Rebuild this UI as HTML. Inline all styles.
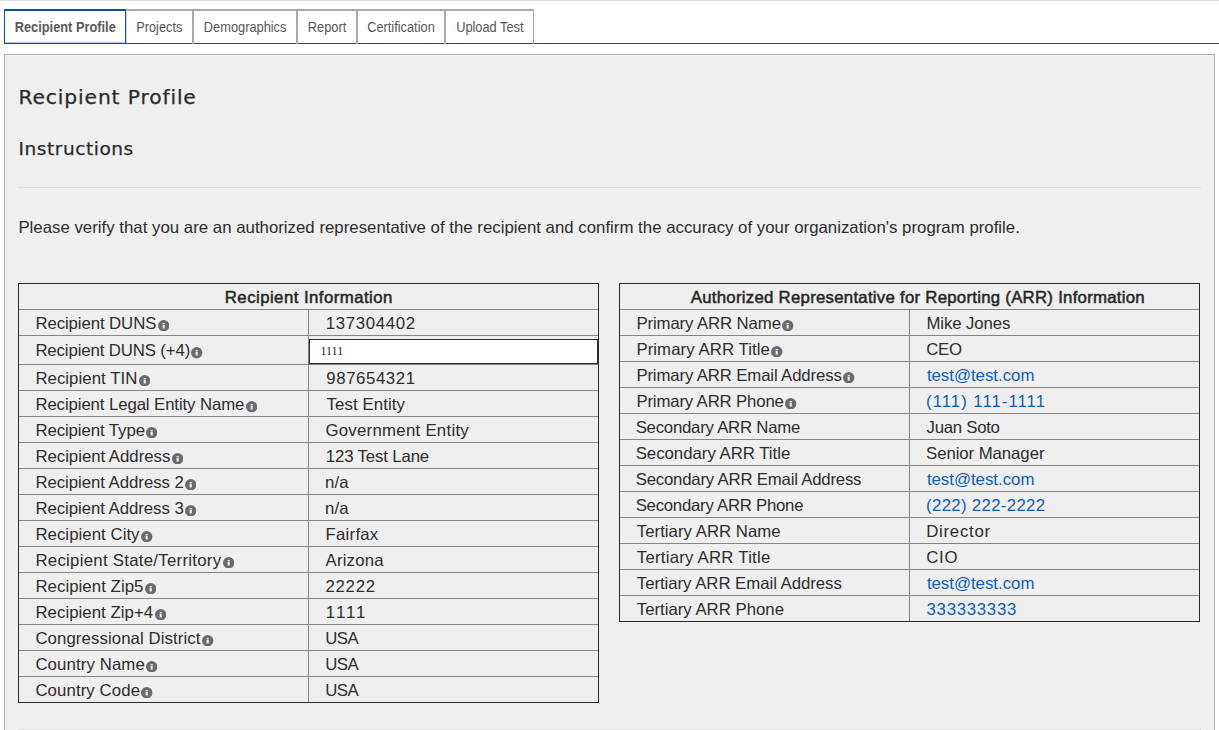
<!DOCTYPE html>
<html lang="en">
<head>
<meta charset="utf-8">
<title>Recipient Profile</title>
<style>
html,body{margin:0;padding:0;background:#fff;}
body{width:1219px;height:730px;overflow:hidden;position:relative;font-family:"Liberation Sans",sans-serif;color:#222;}
.topline{position:absolute;left:0;top:0;width:1219px;height:1px;background:#ddd;}
.tabs{position:absolute;left:4px;top:9px;height:35px;width:1215px;border-bottom:1px solid #0850a3;box-sizing:border-box;}
.tab{position:absolute;top:0;height:34px;box-sizing:border-box;border-top:2px solid #aaa;border-right:2px solid #aaa;font-size:14px;color:#555;line-height:33px;text-align:center;white-space:nowrap;background:#fff;}
.tab span{display:inline-block;transform:scaleX(0.915);transform-origin:50% 50%;}
.tab:not(.active)::after{content:"";position:absolute;right:-2px;bottom:-1px;width:2px;height:1px;background:#aaa;}
.tab.active{border:1px solid #0850a3;border-top-width:2px;border-bottom:1px solid #0850a3;height:35px;font-weight:bold;line-height:33px;color:#595959;box-shadow:inset 0 -1px 0 rgba(8,80,163,0.3);z-index:2;}
.tab.active + .tab{border-left:1px solid #d4d4d4;}
.tab:last-child{border-right-width:1px;}
.tab:last-child::after{right:-1px;width:1px;}
.panel{position:absolute;left:4px;top:54px;width:1211px;height:690px;box-sizing:border-box;border:1px solid #adadad;background:#efefef;box-shadow:inset 0 1px 0 #f6f6f6;}
h1,h2,p{margin:0;padding:0;position:absolute;white-space:nowrap;font-weight:normal;}
h1{left:18.5px;top:85px;font-size:20.3px;letter-spacing:0.85px;font-family:"DejaVu Sans",sans-serif;color:#2a2a2a;-webkit-text-stroke:0.25px #2a2a2a;}
h2{left:18.5px;top:138px;font-size:18.5px;letter-spacing:0.55px;font-family:"DejaVu Sans",sans-serif;color:#2a2a2a;-webkit-text-stroke:0.25px #2a2a2a;}
.hr{position:absolute;left:18px;width:1183px;height:1px;background:#dcdcdc;}
p{left:18.4px;top:217.8px;font-size:16.8px;letter-spacing:0.015px;color:#2c2c2c;transform:scaleY(1.02);transform-origin:0 15px;}
.tbl{position:absolute;box-sizing:border-box;border:1px solid #2b2b2b;}
.row{position:absolute;left:0;width:579px;box-sizing:border-box;border-top:1px solid #858585;height:26px;}
.th{position:absolute;left:0;top:1px;width:579px;height:25px;line-height:25px;text-align:center;font-weight:normal;-webkit-text-stroke:0.5px #262626;color:#262626;font-size:16.8px;white-space:nowrap;transform:scaleY(1.02);transform-origin:0 18.3px;}
.vline{position:absolute;top:25px;width:1px;background:#858585;}
.t{position:absolute;top:0;height:25px;line-height:25px;font-size:16.8px;white-space:nowrap;color:#2c2c2c;transform:scaleY(1.02);transform-origin:0 18.3px;}
a.t{color:#0d5cb6;text-decoration:none;}
.i{position:absolute;width:11.4px;height:11.4px;}
.ibox{position:absolute;box-sizing:border-box;border:1px solid #2b2b2b;background:#fff;}
input{position:absolute;left:0;top:-0.3px;width:287px;height:23px;box-sizing:border-box;border:0;background:transparent;font-family:"Liberation Serif",serif;font-size:12px;line-height:23px;padding:0 0 0 10.5px;margin:0;color:#222;outline:none;border-radius:0;transform:scaleY(1.09);transform-origin:0 50%;}
</style>
</head>
<body>
<div class="topline"></div>
<div class="tabs" role="tablist">
<div class="tab active" role="tab" style="left:0px;width:122px"><span>Recipient Profile</span></div>
<div class="tab" role="tab" style="left:122px;width:68px"><span>Projects</span></div>
<div class="tab" role="tab" style="left:190px;width:104px"><span>Demographics</span></div>
<div class="tab" role="tab" style="left:294px;width:60px"><span>Report</span></div>
<div class="tab" role="tab" style="left:354px;width:88px"><span>Certification</span></div>
<div class="tab" role="tab" style="left:442px;width:88px"><span>Upload Test</span></div>
</div>
<div class="panel"></div>
<h1>Recipient Profile</h1>
<h2>Instructions</h2>
<div class="hr" style="top:187px"></div>
<p>Please verify that you are an authorized representative of the recipient and confirm the accuracy of your organization's program profile.</p>
<div class="tbl" role="table" style="left:18px;top:283px;width:581px;height:420px">
<div class="th" role="columnheader" style="letter-spacing:0.45px;left:0.3px">Recipient Information</div>
<div class="vline" style="left:289px;height:393px"></div>
<div class="row" role="row" style="top:25px;height:26px">
<span class="t" style="left:16.39px;top:1px;letter-spacing:-0.092px">Recipient DUNS</span>
<svg class="i" style="left:138.6px;top:9.9px" viewBox="0 0 11 11"><circle cx="5.5" cy="5.5" r="5.5" fill="#6a6a70"/><rect x="4.45" y="4.7" width="2.1" height="3.5" fill="#ececec"/><rect x="4.45" y="2.9" width="2.1" height="1.3" fill="#e4e4e4"/></svg>
<span class="t" style="left:306.79px;top:1px;letter-spacing:0.653px">137304402</span>
</div>
<div class="row" role="row" style="top:51px;height:29px">
<span class="t" style="left:16.39px;top:1.8px;letter-spacing:-0.125px">Recipient DUNS (+4)</span>
<svg class="i" style="left:172.35px;top:11.4px" viewBox="0 0 11 11"><circle cx="5.5" cy="5.5" r="5.5" fill="#6a6a70"/><rect x="4.45" y="4.7" width="2.1" height="3.5" fill="#ececec"/><rect x="4.45" y="2.9" width="2.1" height="1.3" fill="#e4e4e4"/></svg>
<div class="ibox" style="left:290px;top:3px;width:289px;height:25px"><input type="text" value="1111"></div>
</div>
<div class="row" role="row" style="top:80px;height:26px">
<span class="t" style="left:16.39px;top:1px;letter-spacing:0.044px">Recipient TIN</span>
<svg class="i" style="left:119.6px;top:9.9px" viewBox="0 0 11 11"><circle cx="5.5" cy="5.5" r="5.5" fill="#6a6a70"/><rect x="4.45" y="4.7" width="2.1" height="3.5" fill="#ececec"/><rect x="4.45" y="2.9" width="2.1" height="1.3" fill="#e4e4e4"/></svg>
<span class="t" style="left:307.35px;top:1px;letter-spacing:0.583px">987654321</span>
</div>
<div class="row" role="row" style="top:106px;height:26px">
<span class="t" style="left:16.39px;top:1px;letter-spacing:-0.104px">Recipient Legal Entity Name</span>
<svg class="i" style="left:227.1px;top:9.9px" viewBox="0 0 11 11"><circle cx="5.5" cy="5.5" r="5.5" fill="#6a6a70"/><rect x="4.45" y="4.7" width="2.1" height="3.5" fill="#ececec"/><rect x="4.45" y="2.9" width="2.1" height="1.3" fill="#e4e4e4"/></svg>
<span class="t" style="left:307.59px;top:1px;letter-spacing:0.089px">Test Entity</span>
</div>
<div class="row" role="row" style="top:132px;height:26px">
<span class="t" style="left:16.39px;top:1px;letter-spacing:-0.083px">Recipient Type</span>
<svg class="i" style="left:127.1px;top:9.9px" viewBox="0 0 11 11"><circle cx="5.5" cy="5.5" r="5.5" fill="#6a6a70"/><rect x="4.45" y="4.7" width="2.1" height="3.5" fill="#ececec"/><rect x="4.45" y="2.9" width="2.1" height="1.3" fill="#e4e4e4"/></svg>
<span class="t" style="left:306.39px;top:1px;letter-spacing:0.275px">Government Entity</span>
</div>
<div class="row" role="row" style="top:158px;height:26px">
<span class="t" style="left:16.39px;top:1px;letter-spacing:-0.02px">Recipient Address</span>
<svg class="i" style="left:152.6px;top:9.9px" viewBox="0 0 11 11"><circle cx="5.5" cy="5.5" r="5.5" fill="#6a6a70"/><rect x="4.45" y="4.7" width="2.1" height="3.5" fill="#ececec"/><rect x="4.45" y="2.9" width="2.1" height="1.3" fill="#e4e4e4"/></svg>
<span class="t" style="left:306.79px;top:1px;letter-spacing:-0.145px">123 Test Lane</span>
</div>
<div class="row" role="row" style="top:184px;height:26px">
<span class="t" style="left:16.39px;top:1px;letter-spacing:-0.045px">Recipient Address 2</span>
<svg class="i" style="left:166.1px;top:9.9px" viewBox="0 0 11 11"><circle cx="5.5" cy="5.5" r="5.5" fill="#6a6a70"/><rect x="4.45" y="4.7" width="2.1" height="3.5" fill="#ececec"/><rect x="4.45" y="2.9" width="2.1" height="1.3" fill="#e4e4e4"/></svg>
<span class="t" style="left:306.06px;top:1px;letter-spacing:0.09px">n/a</span>
</div>
<div class="row" role="row" style="top:210px;height:26px">
<span class="t" style="left:16.39px;top:1px;letter-spacing:-0.05px">Recipient Address 3</span>
<svg class="i" style="left:166.1px;top:9.9px" viewBox="0 0 11 11"><circle cx="5.5" cy="5.5" r="5.5" fill="#6a6a70"/><rect x="4.45" y="4.7" width="2.1" height="3.5" fill="#ececec"/><rect x="4.45" y="2.9" width="2.1" height="1.3" fill="#e4e4e4"/></svg>
<span class="t" style="left:306.06px;top:1px;letter-spacing:0.09px">n/a</span>
</div>
<div class="row" role="row" style="top:236px;height:26px">
<span class="t" style="left:16.39px;top:1px;letter-spacing:0.047px">Recipient City</span>
<svg class="i" style="left:122.35px;top:9.9px" viewBox="0 0 11 11"><circle cx="5.5" cy="5.5" r="5.5" fill="#6a6a70"/><rect x="4.45" y="4.7" width="2.1" height="3.5" fill="#ececec"/><rect x="4.45" y="2.9" width="2.1" height="1.3" fill="#e4e4e4"/></svg>
<span class="t" style="left:306.59px;top:1px;letter-spacing:0.23px">Fairfax</span>
</div>
<div class="row" role="row" style="top:262px;height:26px">
<span class="t" style="left:16.39px;top:1px;letter-spacing:0.277px">Recipient State/Territory</span>
<svg class="i" style="left:204.1px;top:9.9px" viewBox="0 0 11 11"><circle cx="5.5" cy="5.5" r="5.5" fill="#6a6a70"/><rect x="4.45" y="4.7" width="2.1" height="3.5" fill="#ececec"/><rect x="4.45" y="2.9" width="2.1" height="1.3" fill="#e4e4e4"/></svg>
<span class="t" style="left:306.51px;top:1px;letter-spacing:0.188px">Arizona</span>
</div>
<div class="row" role="row" style="top:288px;height:26px">
<span class="t" style="left:16.39px;top:1px;letter-spacing:0.058px">Recipient Zip5</span>
<svg class="i" style="left:125.85px;top:9.9px" viewBox="0 0 11 11"><circle cx="5.5" cy="5.5" r="5.5" fill="#6a6a70"/><rect x="4.45" y="4.7" width="2.1" height="3.5" fill="#ececec"/><rect x="4.45" y="2.9" width="2.1" height="1.3" fill="#e4e4e4"/></svg>
<span class="t" style="left:306.52px;top:1px;letter-spacing:0.712px">22222</span>
</div>
<div class="row" role="row" style="top:314px;height:26px">
<span class="t" style="left:16.39px;top:1px;letter-spacing:0.054px">Recipient Zip+4</span>
<svg class="i" style="left:135.85px;top:9.9px" viewBox="0 0 11 11"><circle cx="5.5" cy="5.5" r="5.5" fill="#6a6a70"/><rect x="4.45" y="4.7" width="2.1" height="3.5" fill="#ececec"/><rect x="4.45" y="2.9" width="2.1" height="1.3" fill="#e4e4e4"/></svg>
<span class="t" style="left:306.79px;top:1px;letter-spacing:2.027px">1111</span>
</div>
<div class="row" role="row" style="top:340px;height:26px">
<span class="t" style="left:16.39px;top:1px;letter-spacing:0.09px">Congressional District</span>
<svg class="i" style="left:183.35px;top:9.9px" viewBox="0 0 11 11"><circle cx="5.5" cy="5.5" r="5.5" fill="#6a6a70"/><rect x="4.45" y="4.7" width="2.1" height="3.5" fill="#ececec"/><rect x="4.45" y="2.9" width="2.1" height="1.3" fill="#e4e4e4"/></svg>
<span class="t" style="left:306.14px;top:1px;letter-spacing:-0.455px">USA</span>
</div>
<div class="row" role="row" style="top:366px;height:26px">
<span class="t" style="left:16.39px;top:1px;letter-spacing:0.107px">Country Name</span>
<svg class="i" style="left:127.1px;top:9.9px" viewBox="0 0 11 11"><circle cx="5.5" cy="5.5" r="5.5" fill="#6a6a70"/><rect x="4.45" y="4.7" width="2.1" height="3.5" fill="#ececec"/><rect x="4.45" y="2.9" width="2.1" height="1.3" fill="#e4e4e4"/></svg>
<span class="t" style="left:306.14px;top:1px;letter-spacing:-0.455px">USA</span>
</div>
<div class="row" role="row" style="top:392px;height:26px">
<span class="t" style="left:16.39px;top:1px;letter-spacing:0.097px">Country Code</span>
<svg class="i" style="left:122.35px;top:9.9px" viewBox="0 0 11 11"><circle cx="5.5" cy="5.5" r="5.5" fill="#6a6a70"/><rect x="4.45" y="4.7" width="2.1" height="3.5" fill="#ececec"/><rect x="4.45" y="2.9" width="2.1" height="1.3" fill="#e4e4e4"/></svg>
<span class="t" style="left:306.14px;top:1px;letter-spacing:-0.455px">USA</span>
</div>
</div>
<div class="tbl" role="table" style="left:619px;top:283px;width:581px;height:339px">
<div class="th" role="columnheader" style="letter-spacing:0.26px;left:8.4px">Authorized Representative for Reporting (ARR) Information</div>
<div class="vline" style="left:289px;height:312px"></div>
<div class="row" role="row" style="top:25px;height:26px">
<span class="t" style="left:16.39px;top:1px;letter-spacing:-0.119px">Primary ARR Name</span>
<svg class="i" style="left:162.35px;top:9.9px" viewBox="0 0 11 11"><circle cx="5.5" cy="5.5" r="5.5" fill="#6a6a70"/><rect x="4.45" y="4.7" width="2.1" height="3.5" fill="#ececec"/><rect x="4.45" y="2.9" width="2.1" height="1.3" fill="#e4e4e4"/></svg>
<span class="t" style="left:306.39px;top:1px;letter-spacing:-0.093px">Mike Jones</span>
</div>
<div class="row" role="row" style="top:51px;height:26px">
<span class="t" style="left:16.39px;top:1px;letter-spacing:0.069px">Primary ARR Title</span>
<svg class="i" style="left:151.35px;top:9.9px" viewBox="0 0 11 11"><circle cx="5.5" cy="5.5" r="5.5" fill="#6a6a70"/><rect x="4.45" y="4.7" width="2.1" height="3.5" fill="#ececec"/><rect x="4.45" y="2.9" width="2.1" height="1.3" fill="#e4e4e4"/></svg>
<span class="t" style="left:306.18px;top:1px;letter-spacing:-0.2px">CEO</span>
</div>
<div class="row" role="row" style="top:77px;height:26px">
<span class="t" style="left:16.39px;top:1px;letter-spacing:-0.144px">Primary ARR Email Address</span>
<svg class="i" style="left:223.35px;top:9.9px" viewBox="0 0 11 11"><circle cx="5.5" cy="5.5" r="5.5" fill="#6a6a70"/><rect x="4.45" y="4.7" width="2.1" height="3.5" fill="#ececec"/><rect x="4.45" y="2.9" width="2.1" height="1.3" fill="#e4e4e4"/></svg>
<a class="t" style="left:306.89px;top:1px;letter-spacing:-0.001px">test@test.com</a>
</div>
<div class="row" role="row" style="top:103px;height:26px">
<span class="t" style="left:16.39px;top:1px;letter-spacing:-0.163px">Primary ARR Phone</span>
<svg class="i" style="left:165.35px;top:9.9px" viewBox="0 0 11 11"><circle cx="5.5" cy="5.5" r="5.5" fill="#6a6a70"/><rect x="4.45" y="4.7" width="2.1" height="3.5" fill="#ececec"/><rect x="4.45" y="2.9" width="2.1" height="1.3" fill="#e4e4e4"/></svg>
<a class="t" style="left:306.1px;top:1px;letter-spacing:0.989px">(111) 111-1111</a>
</div>
<div class="row" role="row" style="top:129px;height:26px">
<span class="t" style="left:15.68px;top:1px;letter-spacing:-0.248px">Secondary ARR Name</span>
<span class="t" style="left:306.59px;top:1px;letter-spacing:-0.277px">Juan Soto</span>
</div>
<div class="row" role="row" style="top:155px;height:26px">
<span class="t" style="left:15.68px;top:1px;letter-spacing:-0.012px">Secondary ARR Title</span>
<span class="t" style="left:306.05px;top:1px;letter-spacing:-0.075px">Senior Manager</span>
</div>
<div class="row" role="row" style="top:181px;height:26px">
<span class="t" style="left:15.68px;top:1px;letter-spacing:-0.211px">Secondary ARR Email Address</span>
<a class="t" style="left:306.89px;top:1px;letter-spacing:-0.001px">test@test.com</a>
</div>
<div class="row" role="row" style="top:207px;height:26px">
<span class="t" style="left:15.68px;top:1px;letter-spacing:-0.263px">Secondary ARR Phone</span>
<a class="t" style="left:306.1px;top:1px;letter-spacing:0.322px">(222) 222-2222</a>
</div>
<div class="row" role="row" style="top:233px;height:26px">
<span class="t" style="left:16.79px;top:1px;letter-spacing:0.016px">Tertiary ARR Name</span>
<span class="t" style="left:306.13px;top:1px;letter-spacing:0.754px">Director</span>
</div>
<div class="row" role="row" style="top:259px;height:26px">
<span class="t" style="left:16.79px;top:1px;letter-spacing:0.229px">Tertiary ARR Title</span>
<span class="t" style="left:306.18px;top:1px;letter-spacing:0.743px">CIO</span>
</div>
<div class="row" role="row" style="top:285px;height:26px">
<span class="t" style="left:16.79px;top:1px;letter-spacing:-0.041px">Tertiary ARR Email Address</span>
<a class="t" style="left:306.89px;top:1px;letter-spacing:-0.001px">test@test.com</a>
</div>
<div class="row" role="row" style="top:311px;height:26px">
<span class="t" style="left:16.79px;top:1px;letter-spacing:-0.01px">Tertiary ARR Phone</span>
<a class="t" style="left:306.59px;top:1px;letter-spacing:0.71px">333333333</a>
</div>
</div>
<div class="hr" style="top:729px"></div>
</body>
</html>
